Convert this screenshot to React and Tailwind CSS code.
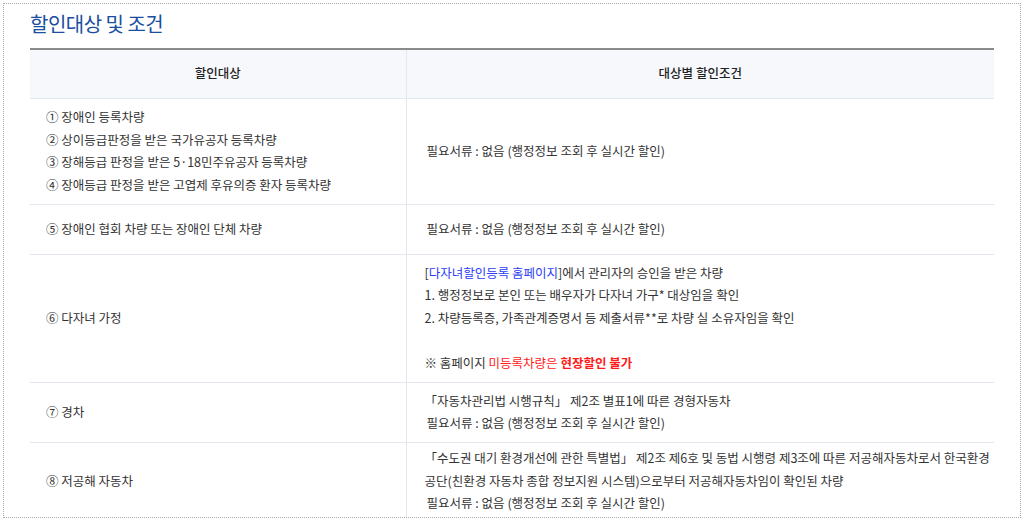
export default function App() {
  const font = { fontFamily: '"Noto Sans CJK KR", "Noto Sans", sans-serif' };
  const td = 'border-b border-[#e3e7ee] align-middle text-[12.5px] leading-[22.5px] text-[#333]';
  return (
    <div className="h-[521px] w-[1024px] bg-white p-[3px]" style={font}>
      <div className="h-[515px] overflow-hidden border border-dotted border-[#aaa] pl-[26px] pr-[25px]">
        <h1 className="pt-[6px] text-[20px] leading-[28px] tracking-[-0.5px] text-[#1a4fa0]">할인대상 및 조건</h1>
        <table className="mt-[10px] w-[964px] table-fixed border-t-2 border-[#8a8a8a]">
          <thead>
            <tr className="h-[49px] bg-[#f6f8fc] text-[12.5px] font-medium text-[#222]">
              <th className="w-[376px] border-b border-r border-[#e3e7ee] font-medium">할인대상</th>
              <th className="border-b border-[#e3e7ee] font-medium">대상별 할인조건</th>
            </tr>
          </thead>
          <tbody>
            <tr className="h-[106px]">
              <td className={`${td} border-r pl-[16px]`}>
                <div>① 장애인 등록차량</div>
                <div>② 상이등급판정을 받은 국가유공자 등록차량</div>
                <div>③ 장해등급 판정을 받은 5·18민주유공자 등록차량</div>
                <div>④ 장애등급 판정을 받은 고엽제 후유의증 환자 등록차량</div>
              </td>
              <td className={`${td} pl-[20px]`}>필요서류 : 없음 (행정정보 조회 후 실시간 할인)</td>
            </tr>
            <tr className="h-[50px]">
              <td className={`${td} border-r pl-[16px]`}>⑤ 장애인 협회 차량 또는 장애인 단체 차량</td>
              <td className={`${td} pl-[20px]`}>필요서류 : 없음 (행정정보 조회 후 실시간 할인)</td>
            </tr>
            <tr className="h-[128px]">
              <td className={`${td} border-r pl-[16px]`}>⑥ 다자녀 가정</td>
              <td className={`${td} pl-[18px]`}>
                <div>[<span className="text-[#2a3df5]">다자녀할인등록 홈페이지</span>]에서 관리자의 승인을 받은 차량</div>
                <div>1. 행정정보로 본인 또는 배우자가 다자녀 가구* 대상임을 확인</div>
                <div>2. 차량등록증, 가족관계증명서 등 제출서류**로 차량 실 소유자임을 확인</div>
                <div>&nbsp;</div>
                <div>※ 홈페이지 <span className="text-[#ff1a1a]">미등록차량은 <b>현장할인 불가</b></span></div>
              </td>
            </tr>
            <tr className="h-[60px]">
              <td className={`${td} border-r pl-[16px]`}>⑦ 경차</td>
              <td className={`${td} pl-[18px]`}>
                <div>「자동차관리법 시행규칙」 제2조 별표1에 따른 경형자동차</div>
                <div className="pl-[2px]">필요서류 : 없음 (행정정보 조회 후 실시간 할인)</div>
              </td>
            </tr>
            <tr className="h-[78px]">
              <td className={`${td} border-r pl-[16px]`}>⑧ 저공해 자동차</td>
              <td className={`${td} pl-[18px]`}>
                <div>「수도권 대기 환경개선에 관한 특별법」 제2조 제6호 및 동법 시행령 제3조에 따른 저공해자동차로서 한국환경공단(친환경 자동차 종합 정보지원 시스템)으로부터 저공해자동차임이 확인된 차량</div>
                <div className="pl-[2px]">필요서류 : 없음 (행정정보 조회 후 실시간 할인)</div>
              </td>
            </tr>
          </tbody>
        </table>
      </div>
    </div>
  );
}
